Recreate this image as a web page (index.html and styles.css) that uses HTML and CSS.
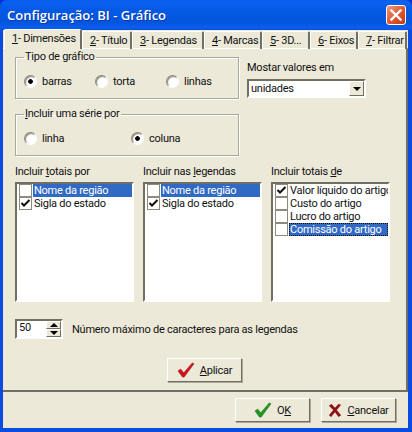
FILE: index.html
```html
<!DOCTYPE html>
<html lang="pt">
<head>
<meta charset="utf-8">
<title>Configuração: BI - Gráfico</title>
<link rel="stylesheet" href="styles.css">
</head>
<body>
<div class="window">
  <header class="titlebar">
    <span class="title">Configuração: BI - Gráfico</span>
    <button class="close" aria-label="Fechar"><svg width="12" height="12" viewBox="0 0 12 12"><path d="M1.5 1.5 10.5 10.5M10.5 1.5 1.5 10.5" stroke="#fff" stroke-width="2.4" stroke-linecap="square"/></svg></button>
  </header>
  <div class="client">
    <nav class="tabs">
      <span class="tab active t1"><u>1</u>- Dimensões</span>
      <span class="tab t2"><u>2</u>- Título</span>
      <span class="tab t3"><u>3</u>- Legendas</span>
      <span class="tab t4"><u>4</u>- Marcas</span>
      <span class="tab t5"><u>5</u>- 3D...</span>
      <span class="tab t6"><u>6</u>- Eixos</span>
      <span class="tab t7"><u>7</u>- Filtrar</span>
    </nav>
    <main class="panel">
      <div class="top">
        <div class="groups">
          <fieldset class="group">
            <legend>Tipo de gráfico</legend>
            <div class="radios r3">
              <label class="radio"><span class="dot on"></span>barras</label>
              <label class="radio"><span class="dot"></span>torta</label>
              <label class="radio"><span class="dot"></span>linhas</label>
            </div>
          </fieldset>
          <fieldset class="group">
            <legend><u>I</u>ncluir uma série por</legend>
            <div class="radios r2">
              <label class="radio"><span class="dot"></span>linha</label>
              <label class="radio"><span class="dot on"></span>coluna</label>
            </div>
          </fieldset>
        </div>
        <div class="values">
          <div class="values-label">Mostar valores em</div>
          <div class="combo"><span class="combo-text">unidades</span><span class="combo-btn"><i class="arrow down"></i></span></div>
        </div>
      </div>
      <div class="lists">
        <section>
          <div class="list-label">Incluir <u>t</u>otais por</div>
          <div class="list">
            <div class="item"><span class="box"></span><span class="text sel">Nome da região</span></div>
            <div class="item"><span class="box"><svg width="11" height="11" viewBox="0 0 11 11"><path d="M1.500 5 4 7.500 9.500 2" fill="none" stroke="#111" stroke-width="2"/></svg></span><span class="text">Sigla do estado</span></div>
          </div>
        </section>
        <section>
          <div class="list-label">Incluir nas <u>l</u>egendas</div>
          <div class="list">
            <div class="item"><span class="box"></span><span class="text sel">Nome da região</span></div>
            <div class="item"><span class="box"><svg width="11" height="11" viewBox="0 0 11 11"><path d="M1.500 5 4 7.500 9.500 2" fill="none" stroke="#111" stroke-width="2"/></svg></span><span class="text">Sigla do estado</span></div>
          </div>
        </section>
        <section>
          <div class="list-label">Incluir totais <u>d</u>e</div>
          <div class="list">
            <div class="item"><span class="box"><svg width="11" height="11" viewBox="0 0 11 11"><path d="M1.500 5 4 7.500 9.500 2" fill="none" stroke="#111" stroke-width="2"/></svg></span><span class="text">Valor líquido do artigo</span></div>
            <div class="item"><span class="box"></span><span class="text">Custo do artigo</span></div>
            <div class="item"><span class="box"></span><span class="text">Lucro do artigo</span></div>
            <div class="item"><span class="box"></span><span class="text sel focus">Comissão do artigo</span></div>
          </div>
        </section>
      </div>
      <div class="max-row">
        <div class="spin"><span class="spin-text">50</span><span class="spin-btns"><span class="spin-btn"><i class="arrow up"></i></span><span class="spin-btn"><i class="arrow down"></i></span></span></div>
        <span>Número máximo de caracteres para as legendas</span>
      </div>
      <div class="apply-row">
        <button class="btn"><svg class="ico" width="18" height="16" viewBox="0 0 20 18"><path d="M1 10 4 8 7.500 12 17 1 19 2 8 17 6 17Z" fill="#d3101c" stroke="#8c0a12" stroke-width=".5"/></svg><span><u>A</u>plicar</span></button>
      </div>
    </main>
    <footer class="footer">
      <button class="btn"><svg class="ico" width="18" height="16" viewBox="0 0 20 18"><path d="M1 10 4 8 7.500 12 17 1 19 2 8 17 6 17Z" fill="#1f9a1f" stroke="#0e5c12" stroke-width=".5"/></svg><span>O<u>K</u></span></button>
      <button class="btn"><svg class="ico" width="14" height="14" viewBox="0 0 16 16"><path d="M1 3 4 1 8 5.500 12 1 15 2 10 8 15 14 12 16 8 10.500 3.500 16 1 14 6 8Z" fill="#8c1216"/></svg><span><u>C</u>ancelar</span></button>
    </footer>
  </div>
</div>
</body>
</html>
```
FILE: styles.css
```css
* { box-sizing: border-box; }
html, body { margin: 0; padding: 0; }
body {
  width: 412px;
  height: 432px;
  overflow: hidden;
  background: #0831d9;
  font-family: Roboto, "Liberation Sans", Arial, sans-serif;
  font-size: 11px;
  letter-spacing: -0.25px;
  color: #111;
}
u { text-decoration: underline; }
.window {
  width: 412px;
  height: 432px;
  display: flex;
  flex-direction: column;
  background: #0a4be0;
  border-radius: 7px 7px 0 0;
  overflow: hidden;
}
.titlebar {
  height: 30px;
  flex: none;
  display: flex;
  align-items: center;
  justify-content: space-between;
  padding: 0 6px 0 7px;
  background: linear-gradient(#0a5be8 0, #0a62f0 3px, #0459e4 10px, #0355dd 22px, #0a5ef0 28px, #0a50d8 30px);
}
.title {
  color: #fff;
  font-family: "Open Sans", "Liberation Sans", sans-serif;
  font-weight: 600;
  font-size: 13px;
  letter-spacing: 0;
  text-shadow: 1px 1px 0 #0a3aa8;
}
.close {
  width: 20px;
  height: 20px;
  padding: 0;
  display: flex;
  align-items: center;
  justify-content: center;
  border: 1px solid #fff;
  border-radius: 3px;
  background: linear-gradient(135deg, #f09a80, #df5a32 50%, #c43a12);
}
.client {
  flex: 1;
  margin: 0 4px 4px 3px;
  background: #ece9d8;
  display: flex;
  flex-direction: column;
  min-height: 0;
}
.tabs {
  height: 19px;
  flex: none;
  display: flex;
  align-items: flex-end;
  padding-left: 1px;
  position: relative;
  z-index: 1;
  margin-bottom: -1px;
}
.tab {
  height: 18px;
  line-height: 17px;
  padding-left: 7px;
  white-space: nowrap;
  border-top: 1px solid #fff;
  border-left: 1px solid #fff;
  border-right: 2px solid #716f64;
  border-radius: 2px 2px 0 0;
}
.tab.active {
  height: 20px;
  background: #ece9d8;
}
.t1 { width: 78px; padding-left: 7px; }
.t2 { width: 50px; }
.t3 { width: 72px; }
.t4 { width: 58px; }
.t5 { width: 48px; }
.t6 { width: 48px; }
.t7 { width: 49px; }
.panel {
  height: 344px;
  flex: none;
  border-top: 1px solid #fff;
  border-right: 2px solid #716f64;
  border-bottom: 2px solid #716f64;
  padding: 0 0 0 12px;
  display: flex;
  flex-direction: column;
}
.top {
  display: flex;
  gap: 8px;
  padding-top: 2px;
}
.groups {
  width: 224px;
  display: flex;
  flex-direction: column;
  gap: 9px;
}
.group {
  margin: 0;
  padding: 0;
  height: 48px;
  border: 1px solid #aca899;
  box-shadow: 1px 1px 0 #fff, inset 1px 1px 0 #fff;
  min-width: 0;
}
.group legend {
  margin-left: 8px;
  padding: 0 1px;
  line-height: 12px;
}
.radios {
  display: grid;
  padding-left: 8px;
  padding-top: 10px;
}
.r3 { grid-template-columns: 71px 71px 1fr; }
.r2 { grid-template-columns: 107px 1fr; }
.radio {
  display: flex;
  align-items: center;
  gap: 5px;
  height: 16px;
}
.dot {
  width: 13px;
  height: 13px;
  flex: none;
  border-radius: 50%;
  border: 1px solid #8a8876;
  border-right-color: #fff;
  border-bottom-color: #fff;
  box-shadow: inset 1px 1px 1px #8d8b7c;
  background: #fff;
}
.dot.on {
  background: radial-gradient(circle, #000 0 2px, #fff 2.6px);
}
.values { padding-top: 10px; }
.values-label { line-height: 14px; margin-bottom: 4px; }
.combo {
  width: 119px;
  height: 19px;
  display: flex;
  justify-content: space-between;
  background: #fff;
  border: 2px solid;
  border-color: #716f64 #fff #fff #716f64;
  outline: 1px solid #ece9d8;
}
.combo-text { padding-left: 2px; line-height: 15px; }
.combo-btn, .spin-btn {
  display: flex;
  align-items: center;
  justify-content: center;
  background: #ece9d8;
  border: 1px solid;
  border-color: #fff #716f64 #716f64 #fff;
}
.combo-btn { width: 15px; }
.arrow {
  display: block;
  width: 0;
  height: 0;
  border-left: 4px solid transparent;
  border-right: 4px solid transparent;
}
.arrow.down { border-top: 4px solid #000; }
.arrow.up { border-bottom: 4px solid #000; }
.lists {
  display: grid;
  grid-template-columns: 119px 119px 119px;
  column-gap: 9px;
  margin-top: 9px;
}
.list-label { line-height: 14px; margin-bottom: 3px; }
.list {
  height: 120px;
  background: #fff;
  border: 2px solid;
  border-color: #716f64 #fff #fff #716f64;
  overflow: hidden;
}
.item {
  display: flex;
  align-items: center;
  height: 13px;
  white-space: nowrap;
}
.box {
  width: 13px;
  height: 13px;
  flex: none;
  margin-left: 2px;
  border: 1px solid #8d8b7c;
  display: flex;
  align-items: center;
  justify-content: center;
  background: #fff;
}
.text {
  flex: 1;
  margin-left: 1px;
  padding-left: 1px;
  line-height: 13px;
  overflow: hidden;
}
.sel { background: #316ac5; color: #fff; }
.focus { outline: 1px dotted #0a0a0a; outline-offset: -1px; }
.max-row {
  display: flex;
  align-items: center;
  gap: 9px;
  margin-top: 17px;
}
.spin {
  width: 48px;
  height: 20px;
  display: flex;
  justify-content: space-between;
  background: #fff;
  border: 2px solid;
  border-color: #716f64 #fff #fff #716f64;
}
.spin-text { line-height: 13px; padding-left: 2px; }
.spin-btns { width: 15px; display: flex; flex-direction: column; }
.spin-btn { flex: 1; }
.apply-row {
  display: flex;
  padding-left: 152px;
  margin-top: 19px;
}
.btn {
  width: 75px;
  height: 24px;
  padding: 0;
  display: flex;
  align-items: center;
  justify-content: center;
  gap: 5px;
  font: inherit;
  letter-spacing: inherit;
  color: #111;
  background: #ece9d8;
  border: 1px solid;
  border-color: #fff #716f64 #716f64 #fff;
  box-shadow: 1px 1px 0 #aca899;
}
.ico { flex: none; }
.footer {
  flex: 1;
  display: flex;
  justify-content: flex-end;
  align-items: flex-start;
  gap: 11px;
  padding: 6px 12px 0 0;
}
```
